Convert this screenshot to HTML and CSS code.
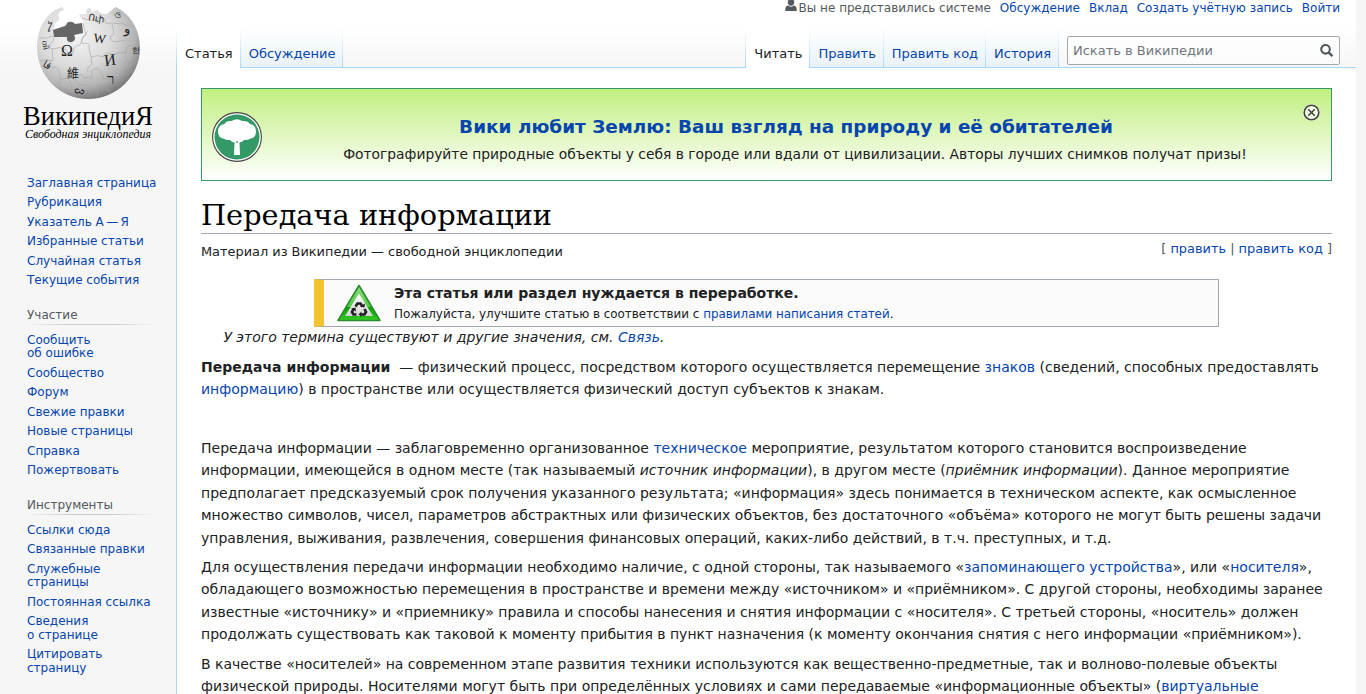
FILE: index.html
```html
<!DOCTYPE html>
<html lang="ru">
<head>
<meta charset="utf-8">
<title>Передача информации — Википедия</title>
<link rel="stylesheet" href="styles.css">
</head>
<body>
<div class="page">
  <aside class="sidebar">
    <a class="logo" href="#">
      <svg width="176" height="160" viewBox="0 0 176 160">
        <defs>
          <radialGradient id="globe" cx="0.38" cy="0.3" r="0.72">
            <stop offset="0" stop-color="#f6f6f6"/><stop offset="0.5" stop-color="#dadada"/><stop offset="0.8" stop-color="#b2b2b2"/><stop offset="1" stop-color="#777"/>
          </radialGradient>
        </defs>
        <path d="M62 7Q56 9 51 13Q37 26 37 47C37 76 60 99 88 99C117 99 140 76 140 48C140 29 130 14 116 7L113 9L107 14L102 14L97 10L92 12L90 8L87 9L86 14L79 14Q81 20 85 22L82 24L73 23Q71 20 67 22L65 26L54 29L55 23Q62 20 58 15Q59 11 64 10Z" fill="url(#globe)"/>
        <path d="M53 30L65 26Q67 25 67 23Q72 20 75 24L82 23L83 33L74 35Q77 40 72 42Q66 43 67 37L54 37Z" fill="#666"/>
        <g fill="none" stroke="#a4a4a4" stroke-width="0.6">
          <path d="M39 38Q47 39 52 36Q56 40 51 43Q47 48 54 49Q60 46 65 49Q69 56 74 52Q72 46 80 45Q83 35 88 31M82 18Q90 22 97 20Q102 14 105 20Q104 25 112 23Q124 23 133 27M83 23L86 35Q79 39 83 44Q91 41 89 49L91 57Q98 54 103 57Q107 50 112 55Q118 52 126 52Q126 44 132 46L139 43M52 49L53 60Q47 64 52 68Q59 65 59 72L61 80Q70 76 75 79Q82 71 84 78L92 77Q90 69 97 68Q103 73 104 79L119 78Q122 72 128 75M91 57L92 64Q86 67 88 72M75 79Q79 86 86 85Q92 90 98 87L111 91M112 24L114 34Q106 38 114 42L126 40M125 52L127 62Q119 65 128 68L137 62M61 80Q54 83 64 89M40 61Q47 58 52 61M98 87L97 97M70 80L73 95"/>
        </g>
        <g class="globe-glyphs">
          <text x="61" y="56" font-size="16">Ω</text><text x="93" y="42" font-size="13" transform="rotate(8 93 42)">W</text>
          <text x="105" y="66" font-size="16" transform="rotate(-8 105 66)">И</text><text class="cjk" x="67" y="78" font-size="12">維</text>
          <text x="107" y="84" font-size="15">ר</text><text x="88" y="20" font-size="9" transform="rotate(9 88 20)">Ուի</text>
          <text x="124" y="33" font-size="13">و</text><text x="45" y="30" font-size="11" transform="rotate(25 45 30)">ไ</text>
          <text x="42" y="41" font-size="9" transform="rotate(80 42 41)">ой</text><text x="42" y="66" font-size="10" transform="rotate(30 42 66)">قا</text>
          <text x="78" y="88" font-size="12" transform="rotate(100 78 88)">ვ</text><text x="132" y="53" font-size="8">한</text><text x="114" y="18" font-size="10">ও</text>
        </g>
        <text class="wordmark" x="23" y="125" textLength="130" lengthAdjust="spacingAndGlyphs">ВикипедиЯ</text>
        <text class="tagline" x="25" y="138" textLength="126" lengthAdjust="spacingAndGlyphs">Свободная энциклопедия</text>
      </svg>
    </a>
    <nav class="portal">
      <a href="#">Заглавная страница</a><a href="#">Рубрикация</a><a href="#">Указатель А&thinsp;—&thinsp;Я</a><a href="#">Избранные статьи</a><a href="#">Случайная статья</a><a href="#">Текущие события</a>
    </nav>
    <nav class="portal">
      <h3>Участие</h3>
      <a href="#">Сообщить<br>об ошибке</a><a href="#">Сообщество</a><a href="#">Форум</a><a href="#">Свежие правки</a><a href="#">Новые страницы</a><a href="#">Справка</a><a href="#">Пожертвовать</a>
    </nav>
    <nav class="portal">
      <h3>Инструменты</h3>
      <a href="#">Ссылки сюда</a><a href="#">Связанные правки</a><a href="#">Служебные<br>страницы</a><a href="#">Постоянная ссылка</a><a href="#">Сведения<br>о странице</a><a href="#">Цитировать<br>страницу</a>
    </nav>
  </aside>
  <div class="main">
    <header class="head">
      <div class="personal">
        <span class="anon"><svg width="12" height="13" viewBox="0 0 12 13"><path d="M6 0C3.900 0 2.700 1.400 2.700 3.200S4 6.700 6 6.700 9.300 5 9.300 3.200 8.100 0 6 0ZM3 6.500C1 7 .3 8.500.3 10v2h11.400v-2c0-1.500-.7-3-2.700-3.500C7.500 8 4.500 8 3 6.500Z" fill="#54595d"/></svg>Вы не представились системе</span>
        <a href="#">Обсуждение</a><a href="#">Вклад</a><a href="#">Создать учётную запись</a><a href="#">Войти</a>
      </div>
      <div class="navigation">
        <div class="tabs"><a class="tab selected" href="#">Статья</a><a class="tab" href="#">Обсуждение</a></div>
        <div class="tabs views"><a class="tab selected" href="#">Читать</a><a class="tab" href="#">Править</a><a class="tab" href="#">Править код</a><a class="tab" href="#">История</a></div>
        <div class="search"><span>Искать в Википедии</span><svg width="13" height="13" viewBox="0 0 13 13" fill="none" stroke="#54595d"><circle cx="5.500" cy="5.300" r="4.300" stroke-width="2.100"/><path d="M8.400 8.200L12.400 12.200" stroke-width="2.400"/></svg></div>
      </div>
    </header>
    <main class="content">
      <section class="banner">
        <svg class="tree" width="50" height="50" viewBox="0 0 50 50"><circle cx="25" cy="25" r="24.400" fill="#fff" stroke="#444" stroke-width="1.100"/><circle cx="25" cy="25" r="22.500" fill="#396"/><path d="M22 43L22.500 30.500Q19.500 30 18 28Q14 28.500 12 26.800Q6 26 6 19.500Q6 13 12.500 12Q14 8.500 19.500 9Q25 5.500 30 9Q36 8.500 38 12Q44 13 44 19.500Q44 26 38 26.800Q36 28.500 32 28Q30.500 30 27.500 30.500L28 43Z" fill="#fff"/><circle cx="25" cy="30" r=".9" fill="#396"/></svg>
        <div class="banner-text"><a class="banner-title" href="#">Вики любит Землю: Ваш взгляд на природу и её обитателей</a><p>Фотографируйте природные объекты у себя в городе или вдали от цивилизации. Авторы лучших снимков получат призы!</p></div>
        <svg class="close" width="18" height="19" viewBox="0 0 18 19"><circle cx="9.500" cy="9.500" r="8.500" fill="#fff" fill-opacity=".7"/><g fill="none" stroke="#444"><circle cx="9.500" cy="9.500" r="7.300" stroke-width="1.600"/><path d="M6.200 6.200L12.800 12.800M12.800 6.200L6.200 12.800" stroke-width="1.600"/></g></svg>
      </section>
      <h1>Передача информации</h1>
      <div class="subline"><span class="sub">Материал из Википедии — свободной энциклопедии</span><span class="edit">[ <a href="#">править</a> | <a href="#">править код</a> ]</span></div>
      <section class="notice">
        <svg width="46" height="38" viewBox="0 0 46 38"><defs><linearGradient id="tri" x2="0" y2="1"><stop offset="0" stop-color="#8be080"/><stop offset=".6" stop-color="#52cb45"/><stop offset=".61" stop-color="#079b05"/><stop offset="1" stop-color="#35cc22"/></linearGradient><linearGradient id="inner" x2="0" y2="1"><stop offset="0" stop-color="#fff"/><stop offset="1" stop-color="#d4d4d4"/></linearGradient></defs><path d="M23 1.500L44 36.500H2Z" fill="url(#tri)" stroke="#2a8c2a" stroke-width="1.600" stroke-linejoin="round"/><path d="M23 9.500L37 32H9Z" fill="url(#inner)"/><g fill="none" stroke="#222" stroke-width="2.700"><path d="M19.500 22.500L21.500 19.500H24.500L26.500 22.500M28.500 25L30 28L28.500 30.500H25M20.500 30.500H17.500L16 28L17.500 25"/></g><path d="M24 22.500L28.500 23.500L29 19.500ZM25.500 27.500L22.500 30.500L25.500 33ZM15 24.500L19.500 23.500L20 27.500Z" fill="#222"/></svg>
        <div><b>Эта статья или раздел нуждается в переработке.</b><p>Пожалуйста, улучшите статью в соответствии с <a href="#">правилами написания статей</a>.</p></div>
      </section>
      <article class="article">
        <div class="hatnote">У этого термина существуют и другие значения, см. <a href="#">Связь</a>.</div>
        <p><b>Передача информации</b>&nbsp; — физический процесс, посредством которого осуществляется перемещение <a href="#">знаков</a> (сведений, способных предоставлять <a href="#">информацию</a>) в пространстве или осуществляется физический доступ субъектов к знакам.</p>
        <p><br></p>
        <p>Передача информации — заблаговременно организованное <a href="#">техническое</a> мероприятие, результатом которого становится воспроизведение информации, имеющейся в одном месте (так называемый <i>источник информации</i>), в другом месте (<i>приёмник информации</i>). Данное мероприятие предполагает предсказуемый срок получения указанного результата; «информация» здесь понимается в техническом аспекте, как осмысленное множество символов, чисел, параметров абстрактных или физических объектов, без достаточного «объёма» которого не могут быть решены задачи управления, выживания, развлечения, совершения финансовых операций, каких-либо действий, в т.ч. преступных, и т.д.</p>
        <p>Для осуществления передачи информации необходимо наличие, с одной стороны, так называемого «<a href="#">запоминающего устройства</a>», или «<a href="#">носителя</a>», обладающего возможностью перемещения в пространстве и времени между «источником» и «приёмником». С другой стороны, необходимы заранее известные «источнику» и «приемнику» правила и способы нанесения и снятия информации с «носителя». С третьей стороны, «носитель» должен продолжать существовать как таковой к моменту прибытия в пункт назначения (к моменту окончания снятия с него информации «приёмником»).</p>
        <p>В качестве «носителей» на современном этапе развития техники используются как вещественно-предметные, так и волново-полевые объекты физической природы. Носителями могут быть при определённых условиях и сами передаваемые «информационные объекты» (<a href="#">виртуальные</a></p>
      </article>
    </main>
  </div>
</div>
</body>
</html>
```
FILE: styles.css
```css
* { box-sizing: border-box; }
body { margin: 0; height: 694px; overflow: hidden; background: #f6f6f6; color: #202122; font-family: "DejaVu Sans", sans-serif; font-size: 14px; }
a { color: #0645ad; text-decoration: none; }
p { margin: 0; }
.page { display: grid; grid-template-columns: 176px 1fr; width: 1356px; height: 694px; overflow: hidden; background: linear-gradient(#fff 27px, #f6f6f6 67px); }
.logo { display: block; height: 173.750px; }
.logo svg { display: block; }
.globe-glyphs { font-family: "Liberation Serif", "DejaVu Sans", serif; fill: #222; }
.globe-glyphs .cjk { font-family: "Noto Sans CJK TC", sans-serif; }
.wordmark { font-family: "Liberation Serif", serif; font-size: 27px; fill: #000; }
.tagline { font-family: "Liberation Serif", serif; font-style: italic; font-size: 12px; fill: #000; }
.portal { padding-left: 27px; font-size: 12px; line-height: 13.500px; }
.portal a { display: block; padding: 3px 0; }
.portal h3 { margin: 0 20px 5.750px 0; padding-top: 15px; font-size: 12px; font-weight: normal; line-height: 18px; color: #54595d; border-bottom: 1px solid; border-image: linear-gradient(to right, rgba(200,204,209,0), #c8ccd1 33%, #c8ccd1 66%, rgba(200,204,209,0)) 1; }
.portal:last-child h3 { margin-bottom: 6px; }
.main { display: flex; flex-direction: column; min-width: 0; }
.head { display: flex; flex-direction: column; height: 68px; flex: none; }
.personal { display: flex; justify-content: flex-end; gap: 9px; height: 28px; padding-right: 16px; font-size: 12px; line-height: 17px; color: #54595d; }
.anon { display: flex; gap: 2px; }
.anon svg { margin-top: -1px; }
.navigation { display: flex; height: 40px; background: linear-gradient(#a7d7f9, #a7d7f9) 1px 39px / 100% 1px no-repeat; }
.tabs { display: flex; padding-left: 1px; background: linear-gradient(#fff, #a7d7f9) 0 0 / 1px 100% no-repeat; }
.views { margin-left: auto; }
.tab { height: 40px; padding: 17px 8px 0; font-size: 13px; line-height: 17px; background: linear-gradient(#fff, #a7d7f9) right top / 1px 100% no-repeat, linear-gradient(#a7d7f9, #a7d7f9) 0 39px / 100% 1px no-repeat, linear-gradient(#fff, #e8f2f8); }
.tab.selected { color: #202122; background: linear-gradient(#fff, #a7d7f9) right top / 1px 100% no-repeat, #fff; }
.search { display: flex; align-items: center; justify-content: space-between; width: 273px; height: 29px; margin: 8px 16px 0 8px; padding: 0 6px 0 5px; border: 1px solid #a2a9b1; border-radius: 2px; background: rgba(255,255,255,.5); font-size: 13px; color: #72777d; }
.content { flex: 1; padding: 20px 24px 0; border-left: 1px solid #a7d7f9; background: #fff; }
.banner { display: flex; height: 93px; padding: 0 11px 0 10px; border: 1px solid #396; background: linear-gradient(#c1ef80, #fff); }
.tree { margin-top: 23px; }
.banner-text { flex: 1; padding: 27px 0 0 8px; text-align: center; white-space: nowrap; }
.banner-title { display: block; font-size: 18.430px; font-weight: bold; line-height: 22px; }
.banner-text p { padding-left: 18px; margin-top: 5px; font-size: 13.830px; line-height: 22px; }
.close { flex: none; margin-top: 14px; }
h1 { margin: 15px 0 0; height: 38px; padding-top: 1px; font-family: "DejaVu Serif", serif; font-size: 28.800px; font-weight: normal; line-height: 37.400px; color: #000; border-bottom: 1px solid #a2a9b1; }
.subline { display: flex; justify-content: space-between; height: 45px; font-size: 12.900px; line-height: 20px; }
.sub { margin-top: 8px; }
.edit { margin-top: 5px; color: #54595d; }
.notice { display: flex; width: 905px; height: 48px; margin: 0 auto; padding: 4px 0 0 12px; border: 1px solid #a2a9b1; border-left: 10px solid #f4c430; background: #fbfbfb; }
.notice div { padding-left: 12px; font-size: 11.920px; }
.notice b { display: block; font-size: 14px; line-height: 19px; }
.notice p { margin-top: 2px; line-height: 19px; }
.article { line-height: 22.400px; }
.hatnote { margin-top: -.7px; padding-left: 22.400px; font-style: italic; }
.article p { margin: 7px 0; }
```
